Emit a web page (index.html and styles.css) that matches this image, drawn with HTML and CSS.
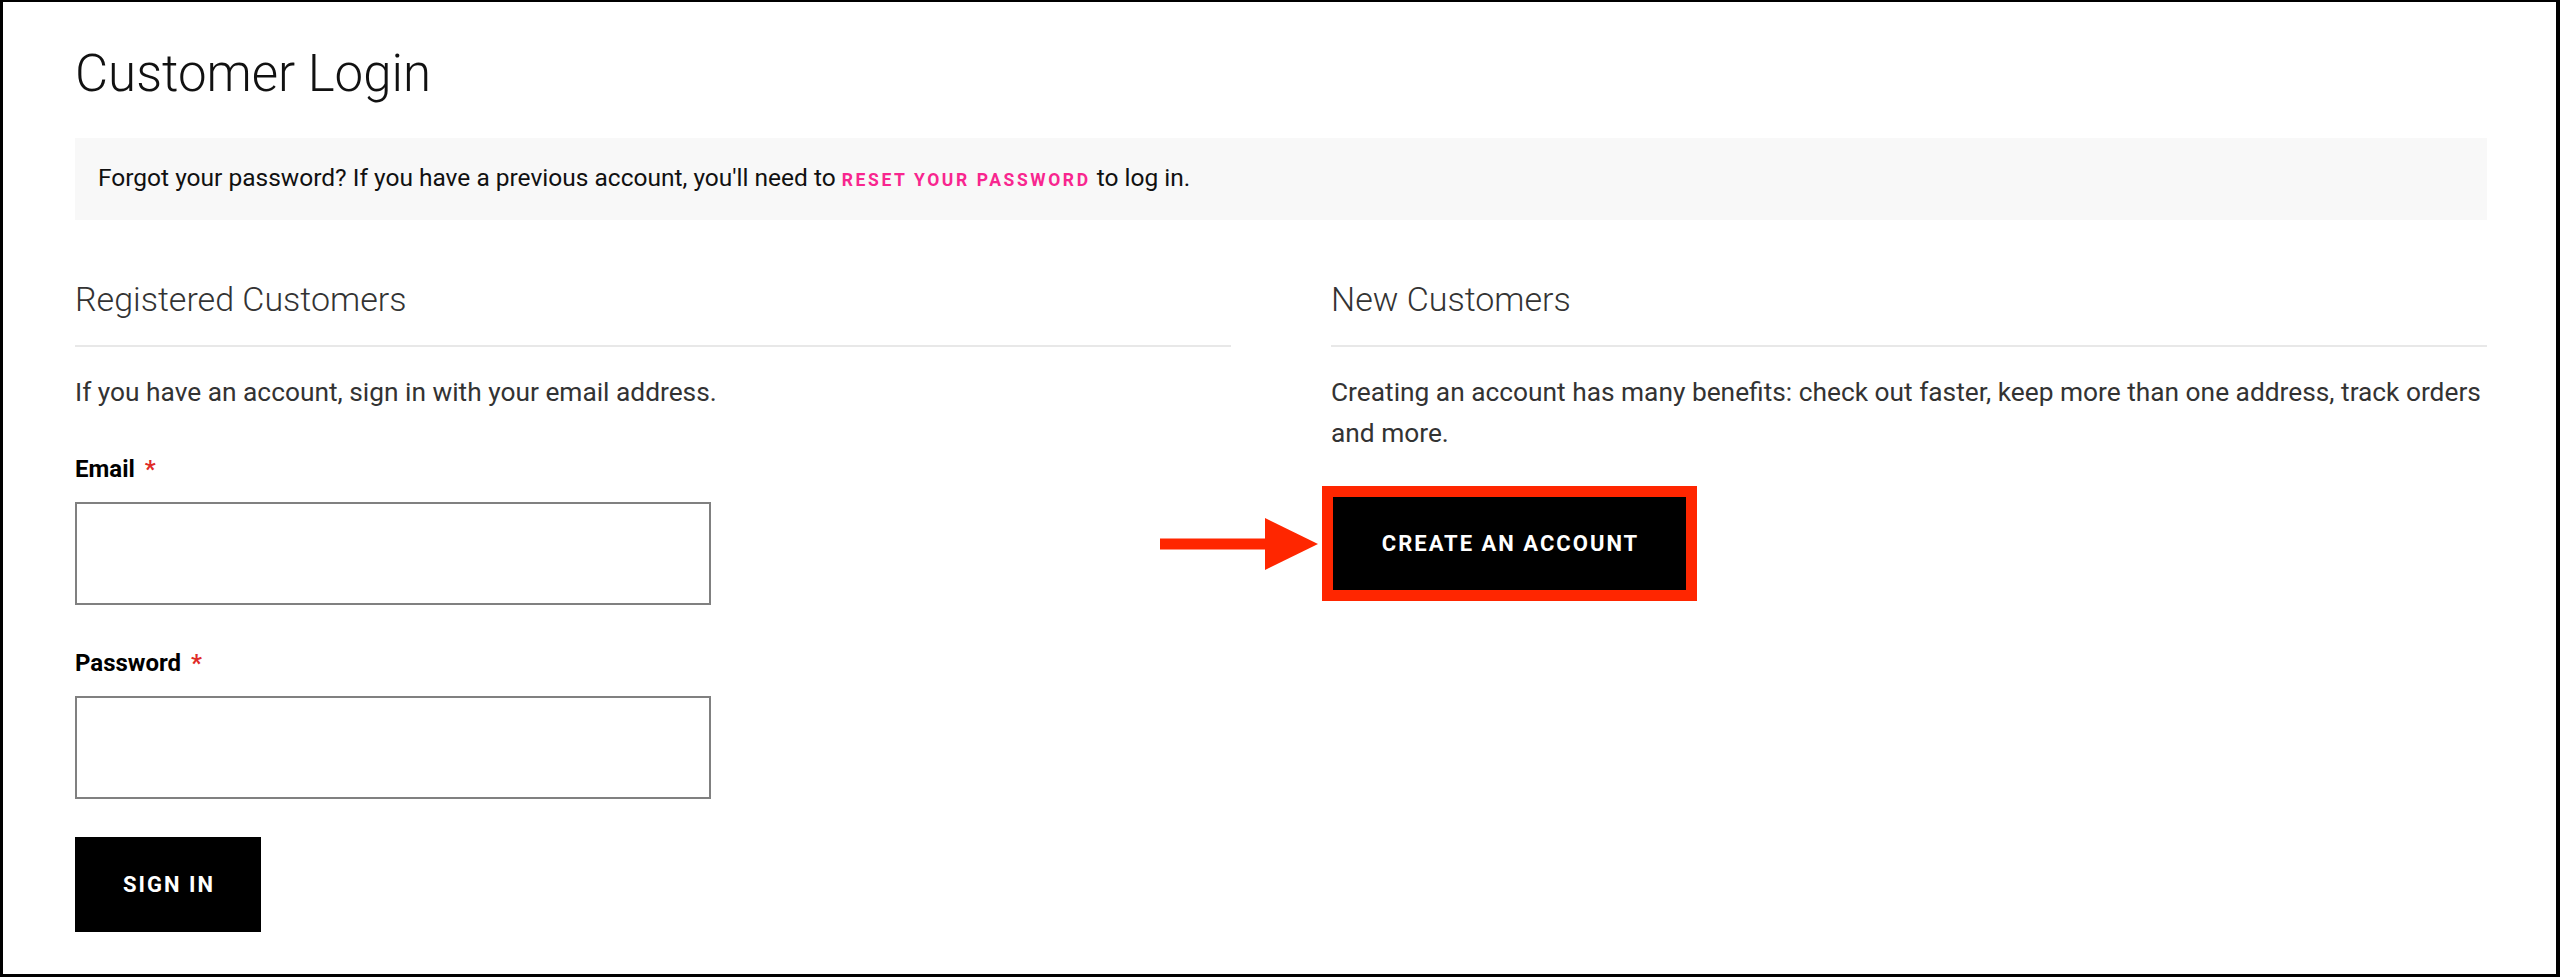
FILE: index.html
```html
<html>
  <head>
    <title>Customer Login</title>
    <link rel="stylesheet" href="styles.css">
  </head>
<body>
  <div class="page">
    <h1 class="page-title">Customer Login</h1>

    <div class="notice">Forgot your password? If you have a previous account, you'll need to <a class="notice-link" href="#">Reset your password</a> to log in.</div>

    <div class="columns">
      <section class="block">
        <h2 class="block-title">Registered Customers</h2>
        <p class="block-text">If you have an account, sign in with your email address.</p>
        <form class="login-form">
          <div class="field">
            <label class="field-label required" for="email">Email</label>
            <input class="field-input" id="email" type="email">
          </div>
          <div class="field">
            <label class="field-label required" for="pass">Password</label>
            <input class="field-input" id="pass" type="password">
          </div>
          <button class="btn btn-signin" type="button">Sign In</button>
        </form>
      </section>

      <section class="block">
        <h2 class="block-title">New Customers</h2>
        <p class="block-text">Creating an account has many benefits: check out faster, keep more than one address, track orders and more.</p>
        <div class="action">
          <a class="btn btn-create" href="#">Create an Account</a>
          <!-- annotation arrow pointing at the button -->
          <svg class="pointer" width="158" height="52" viewBox="0 0 158 52">
            <rect x="0" y="20.5" width="106" height="11" fill="#ff2600"/>
            <polygon points="105,0 158,26 105,52" fill="#ff2600"/>
          </svg>
        </div>
      </section>
    </div>
  </div>
</body>
</html>
```

FILE: styles.css
```css
html, body { margin:0; background:#fff; }
body { font-family:Roboto, "Liberation Sans", sans-serif; color:#333; }

.page
{
  box-sizing:border-box;
  height:977px;
  border:solid #000;
  border-width:2px 4px 3px 3px;
  padding:40px 69px 0 72px;
}

.page-title
{
  margin:0;
  font-size:51px;
  font-weight:300;
  line-height:64px;
  color:#111;
}

.notice
{
  margin-top:32px;
  padding:20px 23px;
  background:#f8f8f8;
  font-size:24.5px;
  line-height:40px;
  color:#111;
}
.notice-link
{
  color:#f8268f;
  font-size:17.5px;
  font-weight:700;
  letter-spacing:2.6px;
  text-transform:uppercase;
  text-decoration:none;
}

.columns
{
  display:grid;
  grid-template-columns:1fr 1fr;
  column-gap:100px;
  margin-top:59px;
}

.block-title
{
  margin:0;
  padding-bottom:26px;
  border-bottom:2px solid #e8e8e8;
  font-size:34px;
  font-weight:300;
  line-height:40px;
  color:#333;
}
.block-text
{
  margin:25px 0 0;
  font-size:26.3px;
  line-height:41px;
  color:#333;
}

.login-form { margin-top:41px; }
.field + .field { margin-top:43px; }

.field-label
{
  display:block;
  font-size:24px;
  font-weight:700;
  line-height:30px;
  color:#000;
}
.field-label.required::after
{
  content:"*";
  margin-left:10px;
  color:#e02b27;
}
.field-input
{
  display:block;
  box-sizing:border-box;
  width:636px;
  height:103px;
  margin-top:18px;
  border:2px solid #808080;
  background:#fff;
}

.btn
{
  display:flex;
  align-items:center;
  justify-content:center;
  box-sizing:border-box;
  padding:0 0 0 2px;
  border:none;
  background:#000;
  color:#fff;
  font-family:Roboto, "Liberation Sans", sans-serif;
  font-size:22px;
  font-weight:700;
  letter-spacing:2px;
  text-transform:uppercase;
  text-decoration:none;
}
.btn-signin
{
  width:186px;
  height:95px;
  margin-top:38px;
}
.btn-create
{
  width:353px;
  height:93px;
  outline:11px solid #ff2600;
}

.action
{
  position:relative;
  width:353px;
  margin:43px 0 0 2px;
}
.pointer
{
  position:absolute;
  top:50%;
  right:calc(100% + 15px);
  transform:translateY(-50%);
}
```
